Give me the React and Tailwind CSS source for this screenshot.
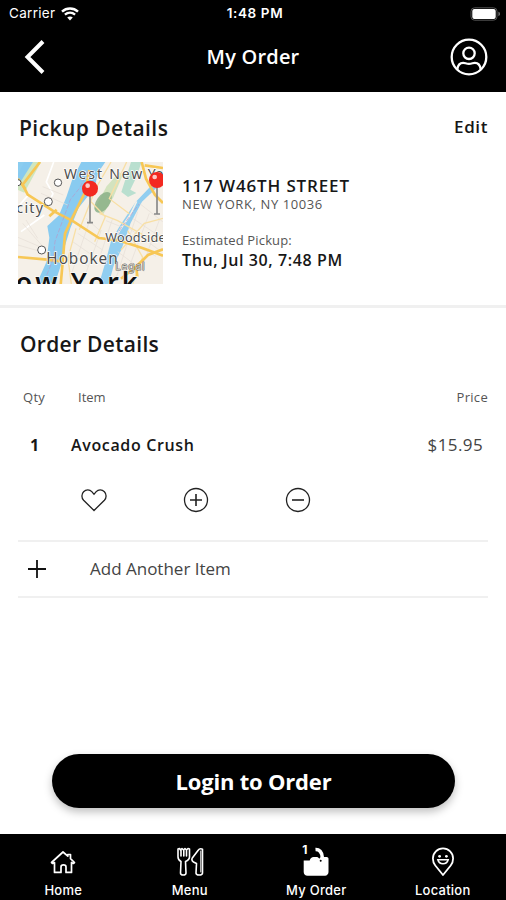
import React from 'react';

const WifiIcon = () => (
    <svg width="18" height="14" viewBox="0 0 18 14" fill="none" stroke="white">
        <path d="M1 4.6C5.6.4 12.4.4 17 4.6" strokeWidth="2.5" />
        <path d="M3.9 7.7c3-2.6 7.2-2.6 10.2 0" strokeWidth="2.3" />
        <path d="M9 13.5 6.2 10.6c1.5-1.5 4.1-1.5 5.6 0z" fill="white" stroke="none" />
    </svg>
);

const BatteryIcon = () => (
    <svg width="31" height="14" viewBox="0 0 31 14">
        <rect x="1" y="0.8" width="26" height="12.4" rx="3.5" fill="none" stroke="#555" strokeWidth="1" />
        <rect x="2.3" y="2" width="23.4" height="10" rx="2" fill="white" />
        <path d="M28.5 4.8c1.8.6 1.8 3.8 0 4.4z" fill="#888" />
    </svg>
);

const ProfileIcon = () => (
    <svg width="38" height="38" viewBox="0 0 38 38" fill="none" stroke="white" strokeWidth="2.3">
        <circle cx="19" cy="19" r="17.3" />
        <circle cx="19" cy="15.3" r="5.7" />
        <path d="M7.3 31.3c.6-4.3 2.5-6.5 5.8-6.5 2 0 3.1 1 5.9 1s3.9-1 5.9-1c3.3 0 5.2 2.2 5.8 6.5" />
    </svg>
);

// Small static map with the store pin
const PickupMap = () => (
    <svg width="145" height="122" viewBox="26 36 435 366" className="shrink-0" fontFamily="Noto Sans, sans-serif">
        <rect x="26" y="36" width="435" height="366" fill="#f5f0e8" />
        <path d="M26 36h30L26 92z" fill="#8bcdf0" />
        <path d="M70 36h25L45 128 26 120v-20z" fill="#cfe6c0" />
        <path d="M45 36h26L26 108V72z" fill="#87caf0" />

        {/* rivers */}
        <path d="M216 36h72l-22 32-10 45-48 60-25 62-20 65-8 45-18 54H83l28-62 9-74-6-35 35-32 22-55 17-50z" fill="#89cbf0" />
        <path d="M461 77l-42 37-40 42-50 76-24 42-18 67-18 61h29l15-55 23-48 28-80 34-64 41-39 22-12z" fill="#91cef0" />
        <path d="M382 154l-20 42-30 43-14 28" fill="none" stroke="#f5f0e8" strokeWidth="5" />
        <path d="M365 36h32l-17 48-17 35 18 10-25 12-20-15z" fill="#b9dfcf" />
        <path d="M330 66l-38 43-37 68 27 15 30-50 28-66z" fill="#d3e3bf" />
        <ellipse cx="281" cy="157" rx="20" ry="35" transform="rotate(35 281 157)" fill="#86ac83" opacity=".8" />
        <path d="M133 36l-22 60 20 35-20 40M26 170l32-36M35 245l70-50" fill="none" stroke="#fff" strokeWidth="5" />

        {/* street grid */}
        <g fill="none" stroke="#e5ded6" strokeWidth="2">
            <path d="M40 220l65 75M50 210l35 55M95 130l80 35M100 110l62 25M26 262l84 36M26 285l70 20M190 275l65 45M205 250l75 50M180 305l58 45M290 212l50 20M230 205l45 40M370 205l90 60M358 234l90 65M340 265l100 54M390 160l70 55M325 305l80 60" />
            <path d="M240 215l-55 160M276 240l-50 140M310 205l-35 105M385 185l-65 200M420 190l-60 160M450 210l-55 150" />
        </g>
        <g fill="none" stroke="#f8dfa4" strokeWidth="4">
            <path d="M305 36l-45 78-50 125M352 36l-52 110 60 45M200 235l-24 90 10 77M270 190l55 22 80 45 56 18M245 155l43 45-32 75" />
            <path d="M335 300l70-80 56-15M370 402l30-80-45-80" />
        </g>

        {/* highways */}
        <g fill="none" stroke="#f7c755" strokeWidth="8">
            <path d="M92 36L40 104l15 30 75 48 62 32 77 50 58 7 74 24 60 22" />
            <path d="M240 60l-12 65-43 86-18 40-6 75-7 78" />
            <path d="M26 321l88 8 42 5M26 86l22 32M142 179l-22 20M397 36l13 50 27 49 24 24M461 54l-55-8M335 386l48-39 33-32 45-17M381 354l3 26" />
        </g>
        <path d="M235 65l-24 49-28 35-25 68-21 57-6 55-30 73M310 276l25-42 55-73" fill="none" stroke="#b899c9" strokeWidth="2" strokeDasharray="14 5" />

        <g fill="white" stroke="#555" strokeWidth="3">
            <circle cx="146" cy="98" r="11" />
            <circle cx="117" cy="155" r="12" />
            <circle cx="97" cy="300" r="12" />
            <circle cx="26" cy="98" r="9" />
        </g>
        <g fill="#4d4d4d" stroke="white" strokeWidth="4" paintOrder="stroke" strokeLinejoin="round">
            <text x="164" y="86" fontSize="42" textLength="235">West New</text>
            <text x="415" y="86" fontSize="42">Yo</text>
            <text x="21" y="190" fontSize="43" textLength="80">city</text>
            <text x="111" y="342" fontSize="46" textLength="214">Hoboken</text>
            <text x="288" y="277" fontSize="38" textLength="181">Woodside</text>
            <text x="318" y="361" fontSize="31" fill="#d9d5c8" stroke="#666" strokeWidth="3" textLength="88">Legal</text>
        </g>
        <g fill="#111" stroke="white" strokeWidth="3" paintOrder="stroke" fontSize="80" fontWeight="600">
            <text x="19" y="427" textLength="125">ow</text>
            <text x="184" y="427" textLength="200">York</text>
        </g>

        {/* pins */}
        <g>
            <path d="M242 132v87M443 105v87" stroke="#888" strokeWidth="5" />
            <path d="M233 218h18M434 192h18" stroke="#888" strokeWidth="5" />
            <circle cx="242" cy="116" r="24" fill="#f32920" />
            <circle cx="443" cy="90" r="24" fill="#f32920" />
            <circle cx="235" cy="107" r="7" fill="#ffc9c4" />
            <circle cx="436" cy="81" r="7" fill="#ffc9c4" />
        </g>
    </svg>
);

const HeartIcon = () => (
    <svg width="26" height="26" viewBox="0 0 26 26" fill="none" stroke="#222" strokeWidth="1.3">
        <path d="M13 23.5 2.6 13.2C.3 10.8.4 7 2.6 4.7 5 2.3 8.6 2.3 10.8 4.6L13 7.3l2.2-2.7c2.2-2.3 5.8-2.3 8.2.1 2.2 2.3 2.3 6.1 0 8.5z" />
    </svg>
);

const CircleIcon = ({ plus }) => (
    <svg width="26" height="26" viewBox="0 0 26 26" fill="none" stroke="#222" strokeWidth="1.3">
        <circle cx="13" cy="13" r="11.5" />
        <path d={plus ? 'M7 13h12M13 7v12' : 'M7 13h12'} strokeWidth="1.6" />
    </svg>
);

const HomeIcon = () => (
    <svg width="28" height="30" viewBox="0 0 28 30" fill="none" stroke="white" strokeWidth="1.7" strokeLinejoin="round" strokeLinecap="round">
        <path d="M2.5 15.5 14 5l4.800 4.200V7.500h2.700v4.200l4 3.800-1.200 1-1.800-1v9.900h-5.500v-5.500c0-1.500-1-2-2.500-2s-2.500.5-2.500 2v5.500H5.500v-9.900l-1.800 1z" />
    </svg>
);

const MenuIcon = () => (
    <svg width="30" height="30" viewBox="0 0 30 30" fill="none" stroke="white" strokeWidth="1.6" strokeLinejoin="round" strokeLinecap="round">
        <path d="M3 2v8c0 2.600 1.300 3.600 3 4.500L5.500 26c0 2.700 5.500 2.700 5.500 0l-.5-11.500c2.200-1 4-2 4-4.500V2l-1.500-.5-1.500 1.500-1.500-1.500L8.500 3 7 1.500 5.500 3 4.500 1.500zM6 3v6M8.800 3v6M11.500 3v6" />
        <path d="M27.500 26V2.200c-2-.9-3.300-.4-4.500 1.200L17.300 11c-.9 1.700-.3 3 1.200 4l3 1.500-.5 9.500c0 2.700 6.500 2.700 6.500 0z" />
        <path d="M25.800 4v21" strokeWidth="1" />
    </svg>
);

// Filled bag, the item count sits over its corner
const OrderIcon = () => (
    <svg width="28" height="30" viewBox="0 0 28 30">
        <path d="M1.700 13.500h6c.5-2 2-3.500 4-3.500h2.500c1.500 0 2.500.7 3 1.700l1.500-1.700h6c1 0 1.800.7 1.800 1.800v13.200c0 2-1.500 3.700-3.500 3.700H5.500c-2.200 0-3.800-1.500-3.800-3.700z" fill="white" />
        <path d="M13.500 2.500c3.500-.2 6.500 2.300 6.800 8" fill="none" stroke="white" strokeWidth="3.6" />
        <circle cx="18.700" cy="13.700" r="1" fill="black" />
    </svg>
);

const LocationIcon = () => (
    <svg width="28" height="30" viewBox="0 0 28 30" fill="none" stroke="white" strokeWidth="1.8">
        <path d="M14 28 6.300 18.500C4.500 16.200 3.900 14 3.900 11.500a10.100 10.100 0 0 1 20.200 0c0 2.500-.6 4.700-2.400 7z" strokeLinejoin="round" />
        <path d="M8.800 12.800c1.500 5.300 8.900 5.300 10.400 0z" strokeWidth="1.5" />
        <circle cx="10.600" cy="9.300" r="1.400" fill="white" stroke="none" />
        <circle cx="17.400" cy="9.300" r="1.400" fill="white" stroke="none" />
    </svg>
);

const tabs = [
    { label: 'Home', icon: <HomeIcon /> },
    { label: 'Menu', icon: <MenuIcon /> },
    { label: 'My Order', icon: <OrderIcon />, badge: 1 },
    { label: 'Location', icon: <LocationIcon /> },
];

const App = () => {
    return (
        <div className="flex h-[900px] w-[506px] flex-col overflow-hidden bg-white font-['Open_Sans',sans-serif] text-[#171717]">
            <header className="h-[92px] shrink-0 bg-black text-white">
                <div className="grid h-[27px] grid-cols-3 items-center pr-[5px] pl-[9px] font-['Inter',sans-serif] text-[13.5px]">
                    <div className="flex items-center gap-1.5">
                        <span className="tracking-[0.3px]">Carrier</span>
                        <WifiIcon />
                    </div>
                    <span className="text-center font-semibold tracking-[0.6px]">1:48 PM</span>
                    <div className="flex justify-end">
                        <BatteryIcon />
                    </div>
                </div>
                <div className="flex h-[59px] items-center justify-between pr-[18px] pl-6">
                    <svg width="32" height="34" viewBox="0 0 32 34" fill="none" stroke="white" strokeWidth="4">
                        <path d="M19 1.500 3.500 17 19 32.500" />
                    </svg>
                    <h1 className="text-xl font-semibold tracking-[0.2px]">My Order</h1>
                    <ProfileIcon />
                </div>
            </header>

            <section className="h-[216px] shrink-0 border-b-[3px] border-[#f0f0f0] px-[18px] pt-[21px]">
                <div className="flex h-8 items-center justify-between">
                    <h2 className="pl-px text-[21px] font-semibold tracking-[0.45px]">Pickup Details</h2>
                    <button className="mb-1 text-[17px] font-semibold tracking-[0.6px]">Edit</button>
                </div>
                <div className="mt-[17px] flex gap-[19px]">
                    <PickupMap />
                    <div className="pt-[13px]">
                        <p className="text-[17px] leading-[21px] font-semibold tracking-[0.85px]">117 W46TH STREET</p>
                        <p className="text-[13px] leading-[17px] tracking-[0.6px] text-[#555]">NEW YORK, NY 10036</p>
                        <p className="mt-[18px] text-[13px] leading-[19px] tracking-[0.15px] text-[#555]">Estimated Pickup:</p>
                        <p className="text-base leading-[21px] font-semibold tracking-[0.6px]">Thu, Jul 30, 7:48 PM</p>
                    </div>
                </div>
            </section>

            <section className="flex-1 px-[18px] pt-5">
                <h2 className="pl-0.5 text-[21px] leading-8 font-semibold tracking-[0.3px]">Order Details</h2>
                <div className="mt-7 flex h-5 items-center text-[13px] text-[#555]">
                    <span className="w-[60px] pl-[5px] tracking-[0.3px]">Qty</span>
                    <span className="flex-1">Item</span>
                    <span className="tracking-[0.3px]">Price</span>
                </div>
                <div className="mt-6 flex h-[26px] items-center pr-[5px]">
                    <span className="w-[53px] pl-3 text-base font-bold">1</span>
                    <span className="flex-1 text-base font-semibold tracking-[0.65px]">Avocado Crush</span>
                    <span className="text-[17px] tracking-[0.4px] text-[#444]">$15.95</span>
                </div>
                <div className="mt-[29px] flex h-[53px] gap-[76px] pl-[63px]">
                    <HeartIcon />
                    <CircleIcon plus />
                    <CircleIcon />
                </div>
                <button className="flex h-[58px] w-full items-center border-y-2 border-[#f0f0f0] pl-[9px] text-left">
                    <svg width="20" height="20" viewBox="0 0 20 20" fill="none" stroke="#111" strokeWidth="1.8">
                        <path d="M1 10h18M10 1v18" />
                    </svg>
                    <span className="pl-[43px] text-[17px] text-[#444]">Add Another Item</span>
                </button>
            </section>

            <div className="h-20 shrink-0 pr-[51px] pl-[52px]">
                <button className="h-[54px] w-full rounded-full bg-black text-[22px] font-bold tracking-[-0.2px] text-white shadow-[0_4px_8px_rgba(0,0,0,0.25)]">
                    Login to Order
                </button>
            </div>

            <nav className="grid h-[66px] shrink-0 grid-cols-4 bg-black text-white">
                {tabs.map((tab) => (
                    <div key={tab.label} className="flex flex-col items-center pt-[13px]">
                        <div className="relative">
                            {tab.icon}
                            {tab.badge && (
                                <span className="absolute -top-[3px] left-0 font-['Inter',sans-serif] text-[12px] leading-3 font-bold">{tab.badge}</span>
                            )}
                        </div>
                        <span className="mt-[5px] font-['Inter',sans-serif] text-[13px] leading-4 font-medium tracking-[0.25px]">{tab.label}</span>
                    </div>
                ))}
            </nav>
        </div>
    );
};

export default App;
